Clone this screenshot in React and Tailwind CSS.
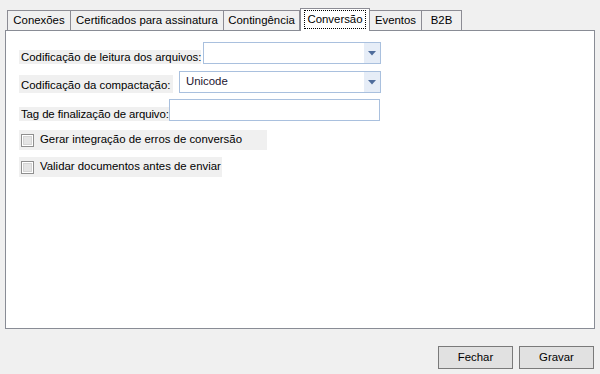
import React from "react";

const TABS = [
  { label: "Conexões", w: "w-[64px]" },
  { label: "Certificados para assinatura", w: "w-[154px]" },
  { label: "Contingência", w: "w-[77px]" },
  { label: "Conversão", w: "w-[70px]", active: true },
  { label: "Eventos", w: "w-[53px]" },
  { label: "B2B", w: "w-[41px]" },
];

function Combo({ width, value }) {
  return (
    <div className={`${width} h-[22px] flex border border-[#a9c0de] bg-white`}>
      <div className="flex-1 pl-[6px] leading-[19px] text-[#1b1530]">{value}</div>
      <div className="w-[16px] h-full bg-[#e6edf7] flex items-center justify-center">
        <svg width="8" height="5" viewBox="0 0 8 5">
          <path d="M0 0h8L4 4.5z" fill="#4f6d9c" />
        </svg>
      </div>
    </div>
  );
}

function Checkbox({ label, width }) {
  return (
    <div className={`${width} h-[20px] bg-[#f0f0f0] flex items-center pl-[2px] gap-[6px] whitespace-nowrap`}>
      <span className="w-[13px] h-[13px] shrink-0 border border-[#8f8f8f] bg-white p-[1px]">
        <span className="block w-full h-full bg-[#e4e4e4] border border-[#d4d4d4]" />
      </span>
      <span>{label}</span>
    </div>
  );
}

export default function App() {
  return (
    <div className="w-[600px] h-[374px] bg-[#f0f0f0] flex flex-col text-[11.4px] text-black font-['Liberation_Sans',Arial,sans-serif]">
      {/* tab strip */}
      <div className="h-[22px] mt-[8px] flex items-end pl-[7px]">
        {TABS.map((t, i) =>
          t.active ? (
            <div
              key={t.label}
              className={`${t.w} h-[23px] -mb-px relative z-10 bg-white border border-b-0 border-[#8c8c94] flex items-start justify-center pt-[1px]`}
            >
              <span className="h-[19px] px-[2px] leading-[17px] border border-dotted border-black whitespace-nowrap">{t.label}</span>
            </div>
          ) : (
            <div
              key={t.label}
              className={`${t.w} h-[20px] ${i > 0 ? "-ml-px" : ""} bg-[#f0f0f0] border border-b-0 border-[#8c8c94] flex items-center justify-center leading-none whitespace-nowrap`}
            >
              {t.label}
            </div>
          )
        )}
      </div>

      {/* panel */}
      <div className="ml-[5px] w-[590px] h-[299px] bg-white border border-[#898c95] pl-[13px] pt-[11px] flex flex-col">
        <div className="flex items-end gap-[2px]">
          <div className="w-[182px] h-[14px] bg-[#f0f0f0] leading-[15px] pl-[2px] whitespace-nowrap">Codificação de leitura dos arquivos:</div>
          <Combo width="w-[178px]" value="" />
        </div>
        <div className="flex items-end gap-[6px] mt-[7px]">
          <div className="w-[154px] h-[18px] bg-[#f0f0f0] leading-[20px] pl-[2px] whitespace-nowrap">Codificação da compactação:</div>
          <Combo width="w-[202px]" value="Unicode" />
        </div>
        <div className="w-[361px] flex items-end mt-[6px]">
          <div className="h-[14px] bg-[#f0f0f0] leading-[15px] pl-[2px] whitespace-nowrap tracking-[-0.1px]">Tag de finalização de arquivo:</div>
          <div className="flex-1 h-[22px] border border-[#a9c0de] bg-white" />
        </div>
        <div className="mt-[9px]">
          <Checkbox label="Gerar integração de erros de conversão" width="w-[248px]" />
        </div>
        <div className="mt-[7px]">
          <Checkbox label="Validar documentos antes de enviar" width="w-[203px]" />
        </div>
      </div>

      {/* buttons */}
      <div className="flex justify-end gap-[6px] pr-[6px] mt-[17px]">
        <button className="w-[75px] h-[23px] bg-[#e1e1e1] border border-[#7a7a7a]">Fechar</button>
        <button className="w-[75px] h-[23px] bg-[#e1e1e1] border border-[#7a7a7a]">Gravar</button>
      </div>
    </div>
  );
}
